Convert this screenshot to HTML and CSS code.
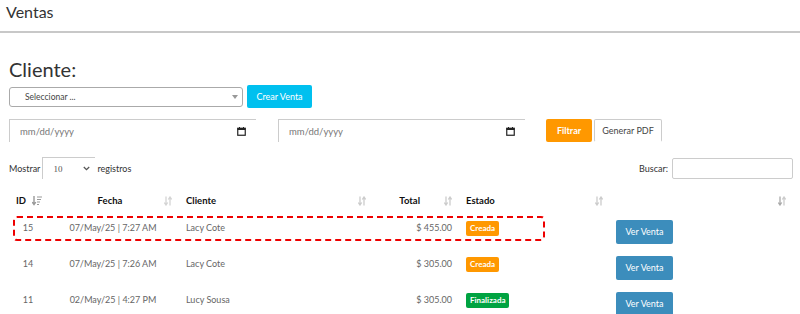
FILE: index.html
```html
<!DOCTYPE html>
<html lang="es">
<head>
<meta charset="utf-8">
<title>Ventas</title>
<link rel="stylesheet" href="styles.css">
</head>
<body>
<header class="page-title">Ventas</header>
<main class="content">
  <h2 class="client-title">Cliente:</h2>
  <div class="row-client">
    <div class="fake-select">
      <span>Seleccionar ...</span>
      <svg class="tri" width="6" height="4" viewBox="0 0 6 4"><path d="M0 0h6L3 4z" fill="#999"/></svg>
    </div>
    <button class="btn btn-cyan">Crear Venta</button>
  </div>
  <div class="row-dates">
    <div class="date"><span>mm/dd/yyyy</span>
      <svg width="9" height="9" viewBox="0 0 9 9"><rect x="0.75" y="1.25" width="7.5" height="7" fill="none" stroke="#222" stroke-width="1.2"/><rect x="0.5" y="1" width="8" height="2" fill="#222"/><path d="M2.5 0v1.5M6.5 0v1.5" stroke="#222" stroke-width="1"/></svg>
    </div>
    <div class="date"><span>mm/dd/yyyy</span>
      <svg width="9" height="9" viewBox="0 0 9 9"><rect x="0.75" y="1.25" width="7.5" height="7" fill="none" stroke="#222" stroke-width="1.2"/><rect x="0.5" y="1" width="8" height="2" fill="#222"/><path d="M2.5 0v1.5M6.5 0v1.5" stroke="#222" stroke-width="1"/></svg>
    </div>
    <div class="btn-pair">
      <button class="btn btn-orange">Filtrar</button>
      <button class="btn btn-white">Generar PDF</button>
    </div>
  </div>
  <div class="row-tools">
    <label class="length">Mostrar
      <span class="len-select"><span>10</span>
        <svg width="7" height="5" viewBox="0 0 7 5"><path d="M0.8 1l2.7 2.6L6.2 1" fill="none" stroke="#555" stroke-width="1.3"/></svg>
      </span>
      registros</label>
    <label class="search">Buscar: <input class="search-input" type="text"></label>
  </div>
  <div class="table-wrap">
    <table class="grid">
      <colgroup>
        <col style="width:40px"><col style="width:130px"><col style="width:194px"><col style="width:86px"><col style="width:151px"><col style="width:183px">
      </colgroup>
      <thead>
        <tr>
          <th><div class="th-in"><span>ID</span>
            <svg class="sort" width="10" height="10" viewBox="0 0 10 10"><path d="M2 0v8M0.2 6.2L2 8.6 3.8 6.2" fill="none" stroke="#999" stroke-width="1.4"/><path d="M5 1h5M5 3.5h4M5 6h3M5 8.5h2" stroke="#999" stroke-width="1.2"/></svg></div></th>
          <th><div class="th-in"><span class="grow center">Fecha</span>
            <svg class="sort" width="8" height="10" viewBox="0 0 8 10"><path d="M2 0.5v8M0.3 6.5L2 9 3.7 6.5" fill="none" stroke="#d4d4d4" stroke-width="1.3"/><path d="M6 9.5v-8M4.3 3.5L6 1 7.7 3.5" fill="none" stroke="#d4d4d4" stroke-width="1.3"/></svg></div></th>
          <th><div class="th-in"><span>Cliente</span>
            <svg class="sort" width="8" height="10" viewBox="0 0 8 10"><path d="M2 0.5v8M0.3 6.5L2 9 3.7 6.5" fill="none" stroke="#ccc" stroke-width="1.3"/><path d="M6 9.5v-8M4.3 3.5L6 1 7.7 3.5" fill="none" stroke="#ccc" stroke-width="1.3"/></svg></div></th>
          <th><div class="th-in end"><span class="total-h">Total</span>
            <svg class="sort" width="8" height="10" viewBox="0 0 8 10"><path d="M2 0.5v8M0.3 6.5L2 9 3.7 6.5" fill="none" stroke="#ccc" stroke-width="1.3"/><path d="M6 9.5v-8M4.3 3.5L6 1 7.7 3.5" fill="none" stroke="#ccc" stroke-width="1.3"/></svg></div></th>
          <th><div class="th-in"><span>Estado</span>
            <svg class="sort" width="8" height="10" viewBox="0 0 8 10"><path d="M2 0.5v8M0.3 6.5L2 9 3.7 6.5" fill="none" stroke="#ccc" stroke-width="1.3"/><path d="M6 9.5v-8M4.3 3.5L6 1 7.7 3.5" fill="none" stroke="#ccc" stroke-width="1.3"/></svg></div></th>
          <th><div class="th-in end">
            <svg class="sort" width="8" height="10" viewBox="0 0 8 10"><path d="M2 0.5v8M0.3 6.5L2 9 3.7 6.5" fill="none" stroke="#aaa" stroke-width="1.3"/><path d="M6 9.5v-8M4.3 3.5L6 1 7.7 3.5" fill="none" stroke="#ccc" stroke-width="1.3"/></svg></div></th>
        </tr>
      </thead>
      <tbody>
        <tr>
          <td class="c">15</td><td class="c">07/May/25 | 7:27 AM</td><td>Lacy Cote</td><td class="r">$ 455.00</td>
          <td><span class="badge orange">Creada</span></td><td class="act"><button class="btn btn-blue">Ver Venta</button></td>
        </tr>
        <tr>
          <td class="c">14</td><td class="c">07/May/25 | 7:26 AM</td><td>Lacy Cote</td><td class="r">$ 305.00</td>
          <td><span class="badge orange">Creada</span></td><td class="act"><button class="btn btn-blue">Ver Venta</button></td>
        </tr>
        <tr>
          <td class="c">11</td><td class="c">02/May/25 | 4:27 PM</td><td>Lucy Sousa</td><td class="r">$ 305.00</td>
          <td><span class="badge green">Finalizada</span></td><td class="act"><button class="btn btn-blue">Ver Venta</button></td>
        </tr>
      </tbody>
    </table>
    <div class="highlight"></div>
  </div>
</main>
</body>
</html>
```
FILE: styles.css
```css
* { box-sizing: border-box; }
html, body { margin: 0; background: #fff; }
body {
  font-family: "Lato", "Open Sans", sans-serif;
  color: #333;
  font-size: 9px;
  overflow: hidden;
}
.page-title {
  height: 33px;
  padding: 3px 6px 0;
  font-size: 16px;
  line-height: 18px;
  color: #333;
  border-bottom: 2px solid #c8c8c8;
}
.content { padding: 0 7px 0 9px; }
.client-title {
  margin: 22px 0 0;
  font-size: 20px;
  font-weight: 400;
  line-height: 28px;
  color: #333;
}
.row-client {
  display: flex;
  align-items: center;
  gap: 4px;
  margin-top: 2px;
}
.fake-select {
  width: 234px;
  height: 20px;
  border: 1px solid #aaa;
  border-radius: 3px;
  display: flex;
  align-items: center;
  justify-content: space-between;
  padding: 0 4px 0 15px;
  font-size: 8.5px;
  color: #444;
}
.btn {
  font-family: inherit;
  font-size: 9px;
  border: 1px solid transparent;
  border-radius: 2px;
  cursor: pointer;
  line-height: 12px;
}
.btn-cyan {
  background: #00c0ef;
  color: #fff;
  width: 65px;
  height: 23px;
  padding: 0;
}
.row-dates {
  display: flex;
  align-items: center;
  margin-top: 11px;
}
.date {
  width: 247px;
  height: 23px;
  border-top: 1px solid #ccc;
  border-left: 1px solid #ccc;
  padding: 0 10px 0 10px;
  display: flex;
  align-items: center;
  justify-content: space-between;
  font-size: 9.5px;
  color: #777;
  background: #fff;
}
.date + .date { margin-left: 22px; }
.btn-pair { display: flex; margin-left: 21px; gap: 2px; }
.btn-orange {
  background: #ff9800;
  color: #fff;
  width: 46px;
  height: 23px;
  padding: 0;
  font-weight: 700;
}
.btn-white {
  background: #fff;
  color: #444;
  width: 68px;
  height: 23px;
  padding: 0;
  border: 1px solid #ccc;
  border-bottom-color: transparent;
}
.row-tools {
  display: flex;
  justify-content: space-between;
  align-items: center;
  margin-top: 15px;
  color: #333;
}
.length { display: flex; align-items: center; gap: 2px; }
.len-select {
  width: 53px;
  height: 22px;
  border: 1px solid #ccc;
  border-right: none;
  border-bottom: none;
  display: flex;
  align-items: center;
  justify-content: space-between;
  padding: 0 5px 0 10px;
  font-family: "Liberation Serif", serif;
  font-size: 9px;
  color: #555;
}
.search { display: flex; align-items: center; gap: 4px; }
.search-input {
  width: 121px;
  height: 21px;
  border: 1px solid #ccc;
  border-radius: 2px;
  padding: 0 4px;
}
.table-wrap {
  position: relative;
  margin: 9px 0 0 -1px;
  width: 784px;
}
.grid {
  width: 784px;
  table-layout: fixed;
  border-collapse: collapse;
}
.grid th {
  padding: 7px 6px 7px 8px;
  font-size: 9.5px;
  line-height: 12px;
  color: #111;
  font-weight: 700;
  text-align: left;
}
.th-in { display: flex; align-items: center; justify-content: space-between; }
.th-in.end { justify-content: flex-end; }
.th-in .grow { flex: 1; }
.th-in .center { text-align: center; }
.total-h { margin-right: 24px; }
.sort { flex: none; }
.grid td {
  height: 36px;
  padding: 8px 6px 8px 8px;
  vertical-align: top;
  font-size: 9px;
  line-height: 12px;
  color: #666;
  white-space: nowrap;
}
.grid td.c { text-align: center; padding-left: 6px; }
.grid td.r { text-align: right; }
.grid td.act { padding: 6px 7px; }
.badge {
  display: inline-block;
  padding: 2px 4px;
  border-radius: 2px;
  color: #fff;
  font-weight: 700;
  font-size: 8px;
  line-height: 11px;
  margin-top: -1px;
}
.badge.orange { background: #ff9800; }
.badge.green { background: #00a341; }
.btn-blue {
  background: #3c8dbc;
  color: #fff;
  width: 57px;
  height: 24px;
  padding: 0;
}
.highlight {
  position: absolute;
  left: 5px;
  top: 28px;
  width: 532px;
  height: 25px;
  border: 2px dashed #e00;
  border-radius: 4px;
  pointer-events: none;
}
```
